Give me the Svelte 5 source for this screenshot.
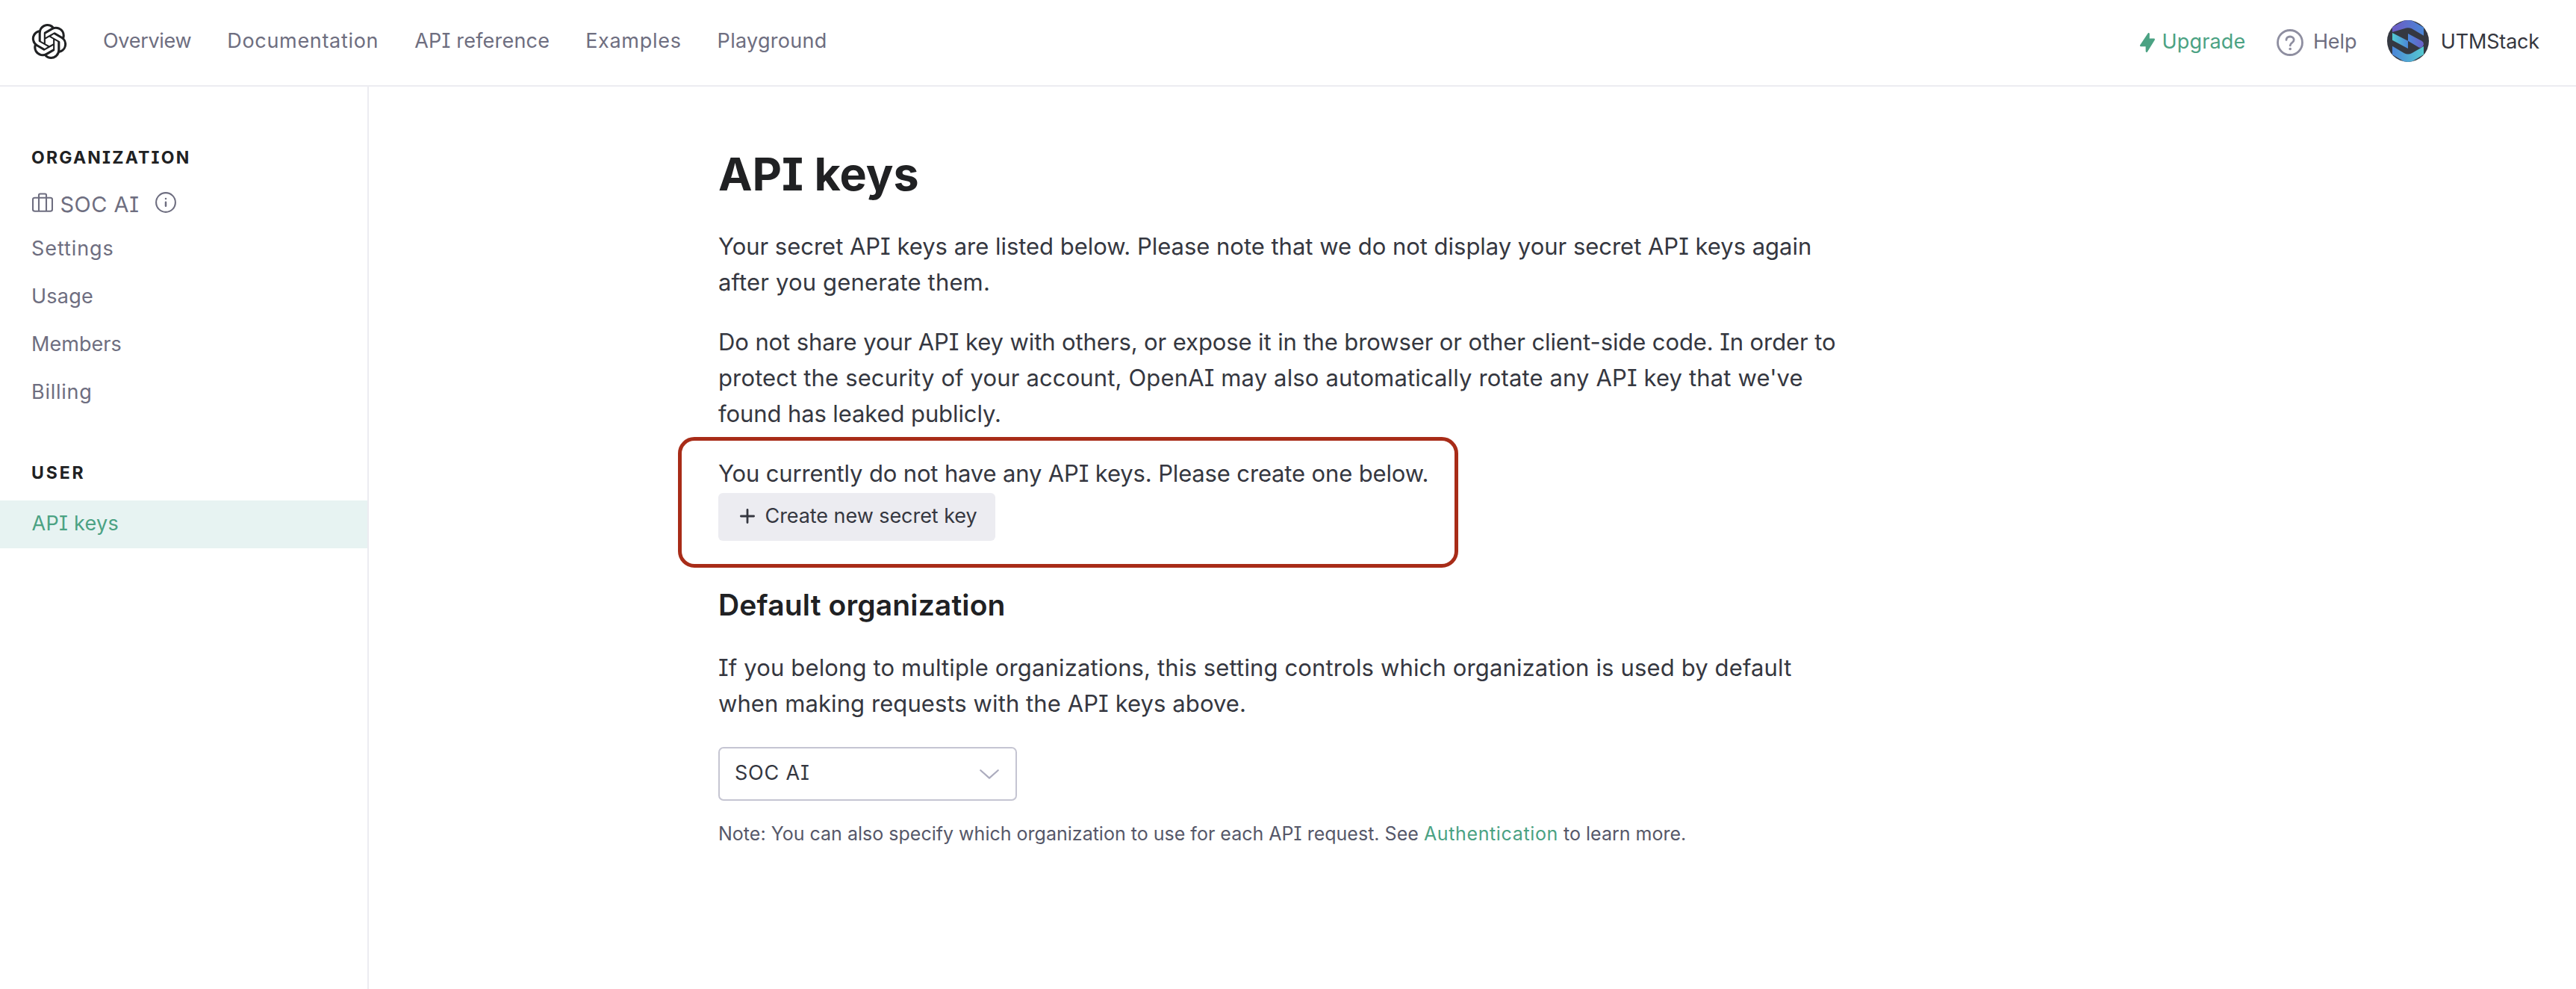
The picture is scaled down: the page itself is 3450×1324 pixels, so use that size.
<script lang="ts">
  const nav = [
    { label: 'Overview', cls: 'overview' },
    { label: 'Documentation', cls: 'docs' },
    { label: 'API reference', cls: 'reference' },
    { label: 'Examples', cls: 'examples' },
    { label: 'Playground', cls: 'playground' },
  ];
  const orgLinks = [
    { label: 'Settings', cls: 'settings' },
    { label: 'Usage', cls: 'usage' },
    { label: 'Members', cls: 'members' },
    { label: 'Billing', cls: 'billing' },
  ];
</script>

<div class="page">
  <header>
    <svg class="logo" viewBox="0 0 24 24" fill="currentColor">
      <path d="M22.2819 9.8211a5.9847 5.9847 0 0 0-.5157-4.9108 6.0462 6.0462 0 0 0-6.5098-2.9A6.0651 6.0651 0 0 0 4.9807 4.1818a5.9847 5.9847 0 0 0-3.9977 2.9 6.0462 6.0462 0 0 0 .7427 7.0966 5.98 5.98 0 0 0 .511 4.9107 6.051 6.051 0 0 0 6.5146 2.9001A5.9847 5.9847 0 0 0 13.2599 24a6.0557 6.0557 0 0 0 5.7718-4.2058 5.9894 5.9894 0 0 0 3.9977-2.9001 6.0557 6.0557 0 0 0-.7475-7.0729zm-9.022 12.6081a4.4755 4.4755 0 0 1-2.8764-1.0408l.1419-.0804 4.7783-2.7582a.7948.7948 0 0 0 .3927-.6813v-6.7369l2.02 1.1686a.071.071 0 0 1 .038.052v5.5826a4.504 4.504 0 0 1-4.4945 4.4944zm-9.6607-4.1254a4.4708 4.4708 0 0 1-.5346-3.0137l.142.0852 4.783 2.7582a.7712.7712 0 0 0 .7806 0l5.8428-3.3685v2.3324a.0804.0804 0 0 1-.0332.0615L9.74 19.9502a4.4992 4.4992 0 0 1-6.1408-1.6464zM2.3408 7.8956a4.485 4.485 0 0 1 2.3655-1.9728V11.6a.7664.7664 0 0 0 .3879.6765l5.8144 3.3543-2.0201 1.1685a.0757.0757 0 0 1-.071 0l-4.8303-2.7865A4.504 4.504 0 0 1 2.3408 7.872zm16.5963 3.8558L13.1038 8.364 15.1192 7.2a.0757.0757 0 0 1 .071 0l4.8303 2.7913a4.4944 4.4944 0 0 1-.6765 8.1042v-5.6772a.79.79 0 0 0-.407-.667zm2.0107-3.0231l-.142-.0852-4.7735-2.7818a.7759.7759 0 0 0-.7854 0L9.409 9.2297V6.8974a.0662.0662 0 0 1 .0284-.0615l4.8303-2.7866a4.4992 4.4992 0 0 1 6.6802 4.66zM8.3065 12.863l-2.02-1.1638a.0804.0804 0 0 1-.038-.0567V6.0742a4.4992 4.4992 0 0 1 7.3757-3.4537l-.142.0805L8.704 5.459a.7948.7948 0 0 0-.3927.6813zm1.0976-2.3654l2.602-1.4998 2.6069 1.4998v2.9994l-2.5974 1.4997-2.6067-1.4997Z" />
    </svg>
    <nav>
      {#each nav as item}
        <a class={item.cls}>{item.label}</a>
      {/each}
    </nav>
    <div class="account">
      <svg class="bolt" viewBox="0 0 20 26">
        <path d="M11.7 1.2 11.6 8.8h7.2L8.9 24.8 8.8 17H1.2Z" fill="currentColor" stroke="currentColor" stroke-width="2.4" stroke-linejoin="round" />
      </svg>
      <span class="upgrade">Upgrade</span>
      <svg class="help-icon" viewBox="0 0 36 36" fill="none" stroke="currentColor" stroke-width="2.8" stroke-linecap="round">
        <circle cx="18" cy="18" r="16.5" />
        <path d="M13 14.4c0-2.7 2.2-4.4 5.1-4.4s5.1 1.8 5.1 4.3c0 2-1.2 3-2.7 4-1.6 1.1-2.3 1.8-2.3 3.6" />
        <circle cx="18.2" cy="26.5" r="1.8" fill="currentColor" stroke="none" />
      </svg>
      <span class="help">Help</span>
      <svg class="avatar" viewBox="21 21 168 168">
        <defs>
          <clipPath id="disc"><circle cx="105" cy="105" r="84" /></clipPath>
          <linearGradient id="top"><stop offset="0.1" stop-color="#6a5ec6" /><stop offset="1" stop-color="#4a86d6" /></linearGradient>
          <linearGradient id="left"><stop offset="0" stop-color="#52cbd0" /><stop offset="1" stop-color="#4b86d8" /></linearGradient>
          <linearGradient id="right"><stop offset="0" stop-color="#4b86d8" /><stop offset="1" stop-color="#6a5ec6" /></linearGradient>
          <linearGradient id="bottom"><stop offset="0" stop-color="#4b86d8" /><stop offset="1" stop-color="#55c9d0" /></linearGradient>
        </defs>
        <g clip-path="url(#disc)">
          <rect x="21" y="21" width="168" height="168" fill="#353841" />
          <path fill="url(#top)" d="M42 69V49L92 21h26l50 29v33l-48-28q-15-6-30 0Z" />
          <path fill="url(#left)" d="M42 72l63 32v31L42 101Z" />
          <path fill="url(#right)" d="M105 75l55 29q8 4 8 14-1 9-10 13l-8 0-45-27Z" />
          <path fill="url(#bottom)" d="M42 125l48 29q15 7 30 0l48-28v33l-50 30H92L42 159Z" />
        </g>
      </svg>
      <span class="user">UTMStack</span>
    </div>
  </header>

  <div class="body">
    <aside>
      <h3 class="org-title">ORGANIZATION</h3>
      <div class="org">
        <svg viewBox="0 0 28 28" fill="none" stroke="currentColor" stroke-width="2.1">
          <rect x="1" y="7.7" width="26" height="18" rx="2.5" />
          <path d="M9 25.7V4.2q0-1.7 1.7-1.7h6.6q1.7 0 1.7 1.7v21.5" />
        </svg>
        <span>SOC AI</span>
        <svg class="info" viewBox="0 0 28 28" fill="none" stroke="currentColor" stroke-width="2.1" stroke-linecap="round">
          <circle cx="14" cy="14" r="12.9" />
          <path d="M14 13.7v5M14 9v.1" stroke-width="2.5" />
        </svg>
      </div>
      {#each orgLinks as item}
        <a class="link {item.cls}">{item.label}</a>
      {/each}
      <h3 class="user-title">USER</h3>
      <a class="link active">API keys</a>
    </aside>

    <main>
      <h1>API keys</h1>
      <p class="secret">
        <span class="a">Your secret API keys are listed below. Please note that we do not display your secret API keys again</span>
        <span class="b">after you generate them.</span>
      </p>
      <p class="share">
        <span class="a">Do not share your API key with others, or expose it in the browser or other client-side code. In order to</span>
        <span class="b">protect the security of your account, OpenAI may also automatically rotate any API key that we've</span>
        <span class="c">found has leaked publicly.</span>
      </p>
      <section class="create">
        <div class="callout"></div>
        <p><span>You currently do not have any API keys. Please create one below.</span></p>
        <button>
          <svg viewBox="0 0 20 20" fill="none" stroke="currentColor" stroke-width="2.8" stroke-linecap="round"><path d="M10 1.4v17.2M1.4 10h17.2" /></svg>
          Create new secret key
        </button>
      </section>
      <h2>Default organization</h2>
      <p class="default">
        <span class="a">If you belong to multiple organizations, this setting controls which organization is used by default</span>
        <span class="b">when making requests with the API keys above.</span>
      </p>
      <div class="select">
        <span>SOC AI</span>
        <svg viewBox="0 0 26 13" fill="none" stroke="currentColor" stroke-width="2.2" stroke-linecap="round" stroke-linejoin="round"><path d="M1.3 1.2 13 11.6 24.7 1.2" /></svg>
      </div>
      <div class="note">Note: You can also specify which organization to use for each API request. See <a>Authentication</a> to learn more.</div>
    </main>
  </div>
</div>

<style>
  :global(body) { margin: 0; background: #fff; }
  .page {
    height: 1324px;
    display: flex;
    flex-direction: column;
    overflow: hidden;
    background: #fff;
    color: #353740;
    font-family: Inter, sans-serif;
    font-size: 27px;
    font-feature-settings: "cv08" 1;
    white-space: nowrap;
  }
  h1, h2, h3, p { margin: 0; }
  svg { display: block; flex: none; }

  header {
    box-sizing: border-box;
    height: 116px;
    flex: none;
    display: flex;
    align-items: center;
    padding: 0 49px 4px 42px;
    border-bottom: 2px solid #ececf1;
    color: #6e6e80;
  }
  .logo { width: 48px; height: 47px; color: #202123; }
  nav { display: flex; gap: 48px; margin: 0 auto 2px 48px; }
  .overview { letter-spacing: -0.3px; }
  .docs { letter-spacing: 0.68px; }
  .reference { letter-spacing: 0.2px; }
  .examples { letter-spacing: 0.7px; }
  .playground { letter-spacing: 0.3px; }
  .account { display: flex; align-items: center; }
  .bolt { width: 20px; height: 26px; margin: 4px 10px 0 0; color: #4ba283; }
  .upgrade { margin-right: 42px; color: #4ba283; letter-spacing: 0.16px; }
  .help-icon { width: 36px; height: 36px; margin: 4px 12.5px 0 0; color: #8e8ea0; }
  .help { margin-right: 41px; letter-spacing: -0.12px; }
  .avatar { width: 56px; height: 56px; margin-right: 15.5px; }
  .user { color: #353740; letter-spacing: -0.18px; }

  .body { flex: 1; display: flex; }
  aside {
    box-sizing: border-box;
    width: 494px;
    flex: none;
    padding-top: 79px;
    border-right: 2px solid #ececf1;
    color: #6e6e80;
  }
  h3 { padding-left: 42px; font-size: 23px; line-height: 32px; font-weight: 700; color: #202123; }
  .org-title { letter-spacing: 2.2px; }
  .user-title { margin: 59px 0 21px; letter-spacing: 2.87px; }
  .org { display: flex; align-items: center; height: 57px; margin-top: 18px; padding-left: 43px; font-size: 29px; letter-spacing: 0.5px; }
  .org svg { width: 28px; height: 28px; margin: 0 9.5px 5px 0; }
  .org .info { margin-left: 21.5px; }
  .link { display: block; height: 62px; padding: 0 0 2px 42px; line-height: 62px; }
  .settings { letter-spacing: 0.91px; }
  .usage { letter-spacing: 0.23px; }
  .members { letter-spacing: 0.05px; }
  .billing { letter-spacing: 0.75px; }
  .active { padding-left: 42.5px; background: #e7f3f2; color: #4ba283; letter-spacing: 0.29px; }

  main { padding: 85px 0 0 468px; }
  main p { font-size: 31px; line-height: 48px; }
  main p span { display: block; }
  h1 { margin-bottom: 41px; font-size: 61px; line-height: 64px; font-weight: 700; color: #202123; letter-spacing: 0; }
  .secret, .share { margin-bottom: 32px; }
  .secret .a { letter-spacing: -0.02px; }
  .secret .b { letter-spacing: 0.15px; }
  .share .a { letter-spacing: -0.1px; }
  .share .b { letter-spacing: 0.138px; }
  .share .c { letter-spacing: -0.1px; }
  .create { position: relative; }
  .create p { letter-spacing: -0.15px; }
  .callout {
    position: absolute;
    top: -25px;
    left: -54px;
    box-sizing: border-box;
    width: 1045px;
    height: 175px;
    border: 5px solid #a82c18;
    border-radius: 22px;
  }
  button {
    box-sizing: border-box;
    display: flex;
    align-items: center;
    gap: 14px;
    width: 371px;
    height: 64px;
    margin-top: 2px;
    padding: 0 0 3px 28.5px;
    border: 0;
    border-radius: 6px;
    background: #ececf1;
    color: #353740;
    font: inherit;
    font-feature-settings: inherit;
    letter-spacing: -0.06px;
  }
  button svg { width: 20px; height: 20px; }
  h2 { margin: 64px 0 37px; font-size: 39px; line-height: 44px; height: 45px; font-weight: 600; color: #202123; letter-spacing: 0.15px; }
  .default .a { letter-spacing: 0.145px; }
  .default .b { letter-spacing: 0.085px; }
  .select {
    box-sizing: border-box;
    display: flex;
    align-items: center;
    justify-content: space-between;
    width: 400px;
    height: 72px;
    margin: 34px 0 24px;
    padding: 0 22.5px 4px 20px;
    border: 2px solid #c5c5d2;
    border-radius: 7px;
    letter-spacing: 0.8px;
  }
  .select svg { width: 26px; height: 13px; margin-top: 4px; color: #acacbe; }
  .note { font-size: 25px; line-height: 40px; color: #565869; letter-spacing: 0.01px; }
  .note a { color: #4ba283; letter-spacing: 0.64px; }
</style>
